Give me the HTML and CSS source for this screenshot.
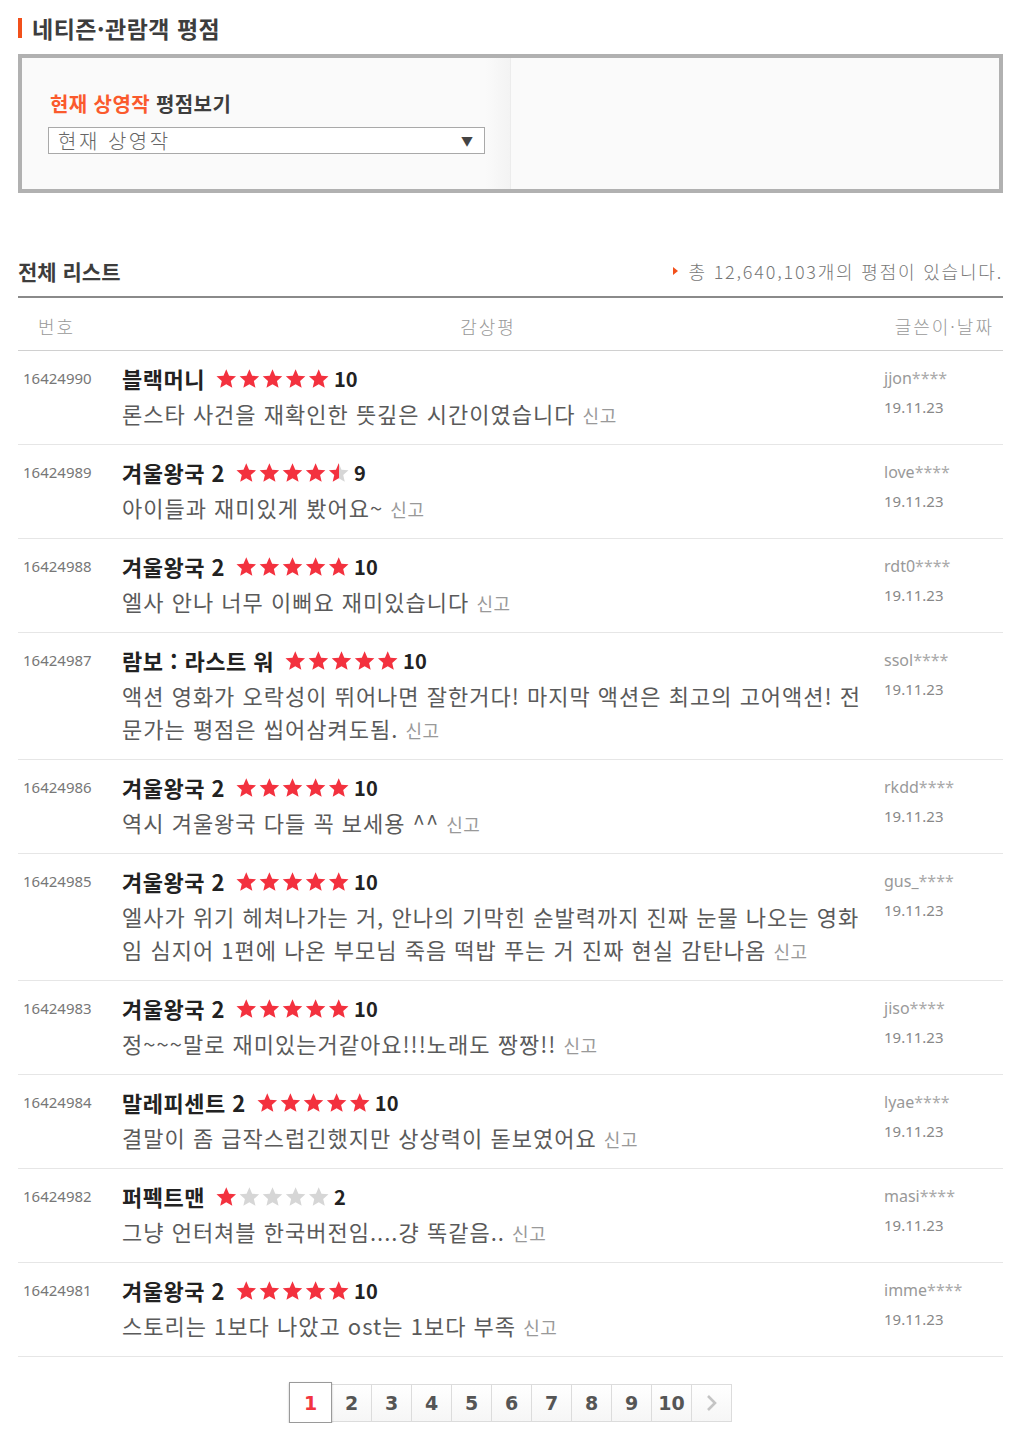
FILE: index.html
```html
<!DOCTYPE html>
<html lang="ko">
<head>
<meta charset="utf-8">
<title>네티즌·관람객 평점</title>
<link rel="stylesheet" href="styles.css">
</head>
<body>
<svg class="defs" width="0" height="0" aria-hidden="true">
  <defs>
    <path id="st" d="M10 0 L12.70 6.28 L19.51 6.91 L14.37 11.42 L15.88 18.09 L10 14.6 L4.12 18.09 L5.63 11.42 L0.49 6.91 L7.30 6.28 Z"/>
    <linearGradient id="half" x1="0" x2="1" y1="0" y2="0">
      <stop offset="50%" stop-color="#f3313e"/>
      <stop offset="50%" stop-color="#d6d6d6"/>
    </linearGradient>
  </defs>
</svg>
<div class="wrap">
  <h2 class="title">네티즌·관람객 평점</h2>
  <div class="filter">
    <div class="filter-left">
      <p class="filter-label"><em>현재 상영작</em> 평점보기</p>
      <div class="select"><span>현재 상영작</span><span class="arrow">▼</span></div>
    </div>
    <div class="filter-right"></div>
  </div>

  <div class="list-head">
    <h3>전체 리스트</h3>
    <p class="total">총 12,640,103개의 평점이 있습니다.</p>
  </div>
  <div class="cols"><span class="c-no">번호</span><span class="c-rev">감상평</span><span class="c-wr">글쓴이·날짜</span></div>

  <ul class="rows">
    <li class="row">
      <div class="no">16424990</div>
      <div class="body">
        <div class="head"><span class="movie">블랙머니</span>
          <svg class="stars" viewBox="0 -1 110 20"><use href="#st" class="on" x="0"/><use href="#st" class="on" x="22.5"/><use href="#st" class="on" x="45"/><use href="#st" class="on" x="67.5"/><use href="#st" class="on" x="90"/></svg>
          <span class="score">10</span></div>
        <p class="text">론스타 사건을 재확인한 뜻깊은 시간이였습니다 <span class="report">신고</span></p>
      </div>
      <div class="writer"><div class="nick">jjon<span>****</span></div><div class="date">19.11.23</div></div>
    </li>
    <li class="row">
      <div class="no">16424989</div>
      <div class="body">
        <div class="head"><span class="movie">겨울왕국 2</span>
          <svg class="stars" viewBox="0 -1 110 20"><use href="#st" class="on" x="0"/><use href="#st" class="on" x="22.5"/><use href="#st" class="on" x="45"/><use href="#st" class="on" x="67.5"/><use href="#st" fill="url(#half)" x="90"/></svg>
          <span class="score">9</span></div>
        <p class="text">아이들과 재미있게 봤어요~ <span class="report">신고</span></p>
      </div>
      <div class="writer"><div class="nick">love<span>****</span></div><div class="date">19.11.23</div></div>
    </li>
    <li class="row">
      <div class="no">16424988</div>
      <div class="body">
        <div class="head"><span class="movie">겨울왕국 2</span>
          <svg class="stars" viewBox="0 -1 110 20"><use href="#st" class="on" x="0"/><use href="#st" class="on" x="22.5"/><use href="#st" class="on" x="45"/><use href="#st" class="on" x="67.5"/><use href="#st" class="on" x="90"/></svg>
          <span class="score">10</span></div>
        <p class="text">엘사 안나 너무 이뻐요 재미있습니다 <span class="report">신고</span></p>
      </div>
      <div class="writer"><div class="nick">rdt0<span>****</span></div><div class="date">19.11.23</div></div>
    </li>
    <li class="row">
      <div class="no">16424987</div>
      <div class="body">
        <div class="head"><span class="movie">람보 : 라스트 워</span>
          <svg class="stars" viewBox="0 -1 110 20"><use href="#st" class="on" x="0"/><use href="#st" class="on" x="22.5"/><use href="#st" class="on" x="45"/><use href="#st" class="on" x="67.5"/><use href="#st" class="on" x="90"/></svg>
          <span class="score">10</span></div>
        <p class="text">액션 영화가 오락성이 뛰어나면 잘한거다! 마지막 액션은 최고의 고어액션! 전문가는 평점은 씹어삼켜도됨. <span class="report">신고</span></p>
      </div>
      <div class="writer"><div class="nick">ssol<span>****</span></div><div class="date">19.11.23</div></div>
    </li>
    <li class="row">
      <div class="no">16424986</div>
      <div class="body">
        <div class="head"><span class="movie">겨울왕국 2</span>
          <svg class="stars" viewBox="0 -1 110 20"><use href="#st" class="on" x="0"/><use href="#st" class="on" x="22.5"/><use href="#st" class="on" x="45"/><use href="#st" class="on" x="67.5"/><use href="#st" class="on" x="90"/></svg>
          <span class="score">10</span></div>
        <p class="text">역시 겨울왕국 다들 꼭 보세용 ^^ <span class="report">신고</span></p>
      </div>
      <div class="writer"><div class="nick">rkdd<span>****</span></div><div class="date">19.11.23</div></div>
    </li>
    <li class="row">
      <div class="no">16424985</div>
      <div class="body">
        <div class="head"><span class="movie">겨울왕국 2</span>
          <svg class="stars" viewBox="0 -1 110 20"><use href="#st" class="on" x="0"/><use href="#st" class="on" x="22.5"/><use href="#st" class="on" x="45"/><use href="#st" class="on" x="67.5"/><use href="#st" class="on" x="90"/></svg>
          <span class="score">10</span></div>
        <p class="text">엘사가 위기 헤쳐나가는 거, 안나의 기막힌 순발력까지 진짜 눈물 나오는 영화임 심지어 1편에 나온 부모님 죽음 떡밥 푸는 거 진짜 현실 감탄나옴 <span class="report">신고</span></p>
      </div>
      <div class="writer"><div class="nick">gus_<span>****</span></div><div class="date">19.11.23</div></div>
    </li>
    <li class="row">
      <div class="no">16424983</div>
      <div class="body">
        <div class="head"><span class="movie">겨울왕국 2</span>
          <svg class="stars" viewBox="0 -1 110 20"><use href="#st" class="on" x="0"/><use href="#st" class="on" x="22.5"/><use href="#st" class="on" x="45"/><use href="#st" class="on" x="67.5"/><use href="#st" class="on" x="90"/></svg>
          <span class="score">10</span></div>
        <p class="text">정~~~말로 재미있는거같아요!!!노래도 짱짱!! <span class="report">신고</span></p>
      </div>
      <div class="writer"><div class="nick">jiso<span>****</span></div><div class="date">19.11.23</div></div>
    </li>
    <li class="row">
      <div class="no">16424984</div>
      <div class="body">
        <div class="head"><span class="movie">말레피센트 2</span>
          <svg class="stars" viewBox="0 -1 110 20"><use href="#st" class="on" x="0"/><use href="#st" class="on" x="22.5"/><use href="#st" class="on" x="45"/><use href="#st" class="on" x="67.5"/><use href="#st" class="on" x="90"/></svg>
          <span class="score">10</span></div>
        <p class="text">결말이 좀 급작스럽긴했지만 상상력이 돋보였어요 <span class="report">신고</span></p>
      </div>
      <div class="writer"><div class="nick">lyae<span>****</span></div><div class="date">19.11.23</div></div>
    </li>
    <li class="row">
      <div class="no">16424982</div>
      <div class="body">
        <div class="head"><span class="movie">퍼펙트맨</span>
          <svg class="stars" viewBox="0 -1 110 20"><use href="#st" class="on" x="0"/><use href="#st" class="off" x="22.5"/><use href="#st" class="off" x="45"/><use href="#st" class="off" x="67.5"/><use href="#st" class="off" x="90"/></svg>
          <span class="score">2</span></div>
        <p class="text">그냥 언터쳐블 한국버전임....걍 똑같음.. <span class="report">신고</span></p>
      </div>
      <div class="writer"><div class="nick">masi<span>****</span></div><div class="date">19.11.23</div></div>
    </li>
    <li class="row">
      <div class="no">16424981</div>
      <div class="body">
        <div class="head"><span class="movie">겨울왕국 2</span>
          <svg class="stars" viewBox="0 -1 110 20"><use href="#st" class="on" x="0"/><use href="#st" class="on" x="22.5"/><use href="#st" class="on" x="45"/><use href="#st" class="on" x="67.5"/><use href="#st" class="on" x="90"/></svg>
          <span class="score">10</span></div>
        <p class="text">스토리는 1보다 나았고 ost는 1보다 부족 <span class="report">신고</span></p>
      </div>
      <div class="writer"><div class="nick">imme<span>****</span></div><div class="date">19.11.23</div></div>
    </li>
  </ul>

  <div class="pager">
    <a class="pg active">1</a><a class="pg">2</a><a class="pg">3</a><a class="pg">4</a><a class="pg">5</a><a class="pg">6</a><a class="pg">7</a><a class="pg">8</a><a class="pg">9</a><a class="pg">10</a><a class="pg next"><svg width="12" height="18" viewBox="0 0 12 18"><polyline points="2,2 9,9 2,16" fill="none" stroke="#c4c4c4" stroke-width="2.6"/></svg></a>
  </div>
</div>
</body>
</html>
```

FILE: styles.css
```css
* { box-sizing: border-box; margin: 0; padding: 0; }
body {
  margin: 0;
  background: #fff;
  font-family: "Noto Sans CJK KR", "Noto Sans", sans-serif;
  color: #333;
}
.defs { position: absolute; width: 0; height: 0; overflow: hidden; }

.wrap { width: 985px; margin-left: 18px; padding-top: 13px; }

.title {
  display: flex; align-items: center; gap: 10px;
  font-size: 23px; font-weight: 700; line-height: 30px;
  color: #3d3d3d; letter-spacing: 0.5px;
  margin-bottom: 11px;
}
.title::before { content: ""; width: 4px; height: 20px; background: #f2501b; }

.filter {
  display: flex; height: 139px;
  border: 4px solid #b1b1b1; background: #fafafa;
}
.filter-left {
  width: 489px; padding: 33px 0 0 26px;
  background: linear-gradient(to right, #fafafa 0, #fafafa 95%, #f3f3f3 100%);
  border-right: 1px solid #ececec;
}
.filter-right { flex: 1; }
.filter-label {
  font-size: 20px; font-weight: 700; line-height: 26px; color: #3d3d3d;
  padding-left: 2px; letter-spacing: 0.4px;
}
.filter-label em { font-style: normal; color: #fa5a2d; }
.select {
  margin-top: 10px; width: 437px; height: 27px;
  border: 1px solid #a9a9a9; background: #fff;
  display: flex; align-items: center; justify-content: space-between;
  padding: 0 11px 0 9px;
  font-size: 20px; font-weight: 300; color: #666; letter-spacing: 2.5px;
}
.select .arrow { font-size: 12px; color: #444; letter-spacing: 0; }

.list-head {
  margin-top: 63px; padding-bottom: 10px;
  display: flex; justify-content: space-between; align-items: center;
  border-bottom: 2px solid #8a8a8a;
}
.list-head h3 { font-size: 21px; font-weight: 700; line-height: 30px; color: #3d3d3d; }
.total {
  position: relative; padding-left: 16px;
  font-size: 18px; line-height: 30px; color: #777; font-weight: 300; letter-spacing: 1.8px;
}
.total::before {
  content: ""; position: absolute; left: 1px; top: 11px;
  border-left: 5px solid #f2501b; border-top: 4px solid transparent; border-bottom: 4px solid transparent;
}

.cols {
  display: flex; height: 53px; padding-top: 4px; line-height: 48px;
  border-bottom: 1px solid #d0d0d0;
  font-size: 18px; font-weight: 300; color: #999; letter-spacing: 2px;
}
.c-no { width: 104px; padding-left: 20px; }
.c-rev { flex: 1; text-align: center; padding-right: 30px; }
.c-wr { width: 119px; text-align: right; padding-right: 9px; }

.rows { list-style: none; }
.row {
  display: flex; padding: 12px 0 14px;
  border-bottom: 1px solid #e6e6e6;
}
.no {
  width: 104px; padding-left: 5px;
  font-family: "Noto Sans", sans-serif; font-size: 15px; line-height: 30px; color: #777;
}
.body { width: 745px; margin-right: 17px; }
.head { display: flex; align-items: center; height: 30px; }
.movie { font-size: 22px; font-weight: 700; color: #222; letter-spacing: 0.5px; white-space: nowrap; }
.stars { width: 113px; height: 21px; margin-left: 11px; }
.stars .on { fill: #f3313e; }
.stars .off { fill: #d6d6d6; }
.score { font-size: 20px; font-weight: 700; color: #222; margin-left: 5px; }
.text {
  margin-top: 4px; font-size: 22px; line-height: 33px; color: #5a5a5a;
  letter-spacing: 1px; word-break: break-all;
}
.report { font-size: 18px; line-height: 20px; color: #999; letter-spacing: 0.5px; }

.writer { width: 119px; }
.nick { font-family: "Noto Sans", sans-serif; font-size: 16px; line-height: 30px; color: #999; }
.nick span { color: #aaa; }
.date { font-family: "Noto Sans", sans-serif; font-size: 15px; line-height: 28px; color: #888; }

.pager {
  margin-top: 25px; display: flex; justify-content: center; align-items: center;
}
.pg {
  width: 41px; height: 38px; margin-left: -1px;
  display: flex; align-items: center; justify-content: center;
  border: 1px solid #dcdcdc;
  background: linear-gradient(#ffffff, #f6f6f6);
  font-family: "DejaVu Sans", sans-serif; font-size: 19px; font-weight: 700; color: #555;
}
.pg.active {
  width: 43px; height: 41px; margin-left: 0; position: relative; z-index: 1;
  border: 1px solid #9a9a9a; background: #fff; color: #f2343f;
  box-shadow: 0 1px 2px rgba(0,0,0,0.25);
}
.pg.next { width: 41px; }
```
